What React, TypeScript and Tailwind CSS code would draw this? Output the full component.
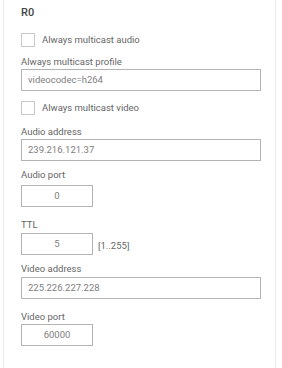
import React from "react";

const font = { fontFamily: "Roboto, 'Liberation Sans', Arial, sans-serif" };

function Label({ children, className = "" }: { children: React.ReactNode; className?: string }) {
  return <div className={`text-[9.5px] leading-[12px] text-[#666] ${className}`}>{children}</div>;
}

function Check({ label, className = "" }: { label: string; className?: string }) {
  return (
    <div className={`flex items-center h-[14px] ${className}`}>
      <div className="w-[14px] h-[14px] border border-[#c8c8c8] bg-white" />
      <span className="ml-[7px] text-[9.5px] leading-[12px] text-[#666]">{label}</span>
    </div>
  );
}

function Input({ value, wide }: { value: string; wide?: boolean }) {
  return (
    <div
      className={`h-[22px] border border-[#b4b4b4] bg-white flex items-center text-[9.5px] text-[#808080] ${
        wide ? "w-[240px] pl-[6px]" : "w-[72px] justify-center"
      }`}
    >
      {value}
    </div>
  );
}

export default function App() {
  return (
    <div className="w-[282px] h-[368px] bg-white overflow-hidden" style={font}>
      <div className="ml-[3px] w-[273px] h-[368px] border-l border-r border-[#ebebeb] pl-[17px] pt-[7px]">
        <div className="text-[11px] leading-[12px] font-medium text-[#444]">R0</div>
        <Check label="Always multicast audio" className="mt-[14px]" />
        <Label className="mt-[9px]">Always multicast profile</Label>
        <div className="mt-[1px]">
          <Input value="videocodec=h264" wide />
        </div>
        <Check label="Always multicast video" className="mt-[10px]" />
        <Label className="mt-[11px]">Audio address</Label>
        <div className="mt-[1px]">
          <Input value="239.216.121.37" wide />
        </div>
        <Label className="mt-[8px]">Audio port</Label>
        <div className="mt-[4px]">
          <Input value="0" />
        </div>
        <Label className="mt-[12px]">TTL</Label>
        <div className="mt-[2px] flex items-center">
          <Input value="5" />
          <span className="ml-[5px] mt-[4px] text-[9.5px] text-[#666]">[1..255]</span>
        </div>
        <Label className="mt-[8px]">Video address</Label>
        <div className="mt-[2px]">
          <Input value="225.226.227.228" wide />
        </div>
        <Label className="mt-[12px]">Video port</Label>
        <div className="mt-[1px]">
          <Input value="60000" />
        </div>
      </div>
    </div>
  );
}
